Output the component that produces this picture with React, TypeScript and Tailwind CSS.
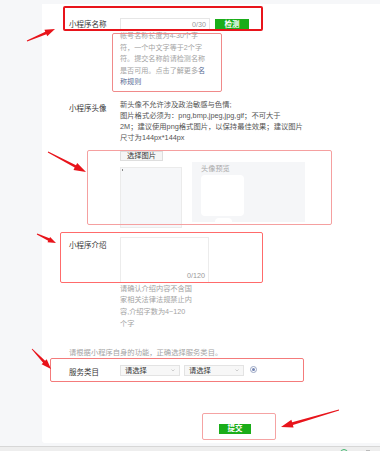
const font = { fontFamily: '"Liberation Sans", "Noto Sans CJK SC", sans-serif' }

type Pt = [number, number]

const arrowPoints = (tail: Pt, tip: Pt, headLen: number, headW: number) => {
    const dx = tip[0] - tail[0]
    const dy = tip[1] - tail[1]
    const len = Math.hypot(dx, dy)
    const ux = dx / len
    const uy = dy / len
    const nx = -uy
    const ny = ux
    const bx = tip[0] - ux * headLen
    const by = tip[1] - uy * headLen
    const p = (x: number, y: number, w: number, s: number) =>
        `${(x + nx * w * s).toFixed(1)},${(y + ny * w * s).toFixed(1)}`
    return [
        p(tail[0], tail[1], 0.4, 1),
        p(bx, by, 1.4, 1),
        p(bx, by, headW / 2, 1),
        `${tip[0]},${tip[1]}`,
        p(bx, by, headW / 2, -1),
        p(bx, by, 1.4, -1),
        p(tail[0], tail[1], 0.4, -1),
    ].join(" ")
}

const arrows: { tail: Pt; tip: Pt; head: number; w: number }[] = [
    { tail: [27, 41], tip: [55, 29], head: 10, w: 7 },
    { tail: [48, 152], tip: [86, 172], head: 12, w: 8 },
    { tail: [37, 234], tip: [56, 243], head: 8, w: 6 },
    { tail: [32, 349], tip: [51, 369], head: 10, w: 7 },
    { tail: [339, 410], tip: [281, 427], head: 12, w: 8 },
]

const Select = () => (
    <div className="flex items-center justify-between w-[60px] h-[11px] px-[4px] border border-[#e3e3e3] bg-[#f7f7f7] text-[7.3px] leading-[11px] text-[#353535]">
        <span>请选择</span>
        <svg width="4" height="3" viewBox="0 0 4 3">
            <polyline points="0.5,0.5 2,2 3.5,0.5" fill="none" stroke="#bbb" strokeWidth="0.7" />
        </svg>
    </div>
)

export default function App() {
    return (
        <div className="relative h-[451px] overflow-hidden bg-[#f6f7f9]" style={font}>
            <div className="pt-[4px] pl-[42px]">
                <div className="h-[439px] bg-white rounded-bl-[3px] pt-[14px] pl-[27px]">
                    {/* name */}
                    <div className="flex items-center h-[13px]">
                        <span className="w-[51px] shrink-0 text-[7.5px] text-[#353535]">小程序名称</span>
                        <div className="w-[90px] h-[13px] border border-[#e6e6e6] text-right pr-[3px] text-[7.2px] leading-[11px] text-[#9a9a9a]">
                            0/30
                        </div>
                        <button className="ml-[5px] w-[34px] h-[12px] bg-[#1aad19] text-white text-[7.5px] leading-[12px] font-bold">
                            检测
                        </button>
                    </div>
                    <p className="ml-[51px] w-[92px] text-[7.1px] leading-[11.5px] text-[#a3a3a3]">
                        帐号名称长度为4-30个字
                        <br />
                        符，一个中文字等于2个字
                        <br />
                        符。提交名称前请检测名称
                        <br />
                        是否可用。点击了解更多<span className="text-[#576b95]">名</span>
                        <br />
                        <span className="text-[#576b95]">称规则</span>
                    </p>

                    {/* avatar */}
                    <div className="flex items-start mt-[10px]">
                        <span className="w-[51px] shrink-0 mt-[4px] text-[7.5px] leading-[11px] text-[#353535]">小程序头像</span>
                        <div className="flex flex-col">
                            <p className="text-[7.3px] leading-[11px] text-[#555]">
                                新头像不允许涉及政治敏感与色情;
                                <br />
                                图片格式必须为：png,bmp,jpeg,jpg,gif；不可大于
                                <br />
                                2M；建议使用png格式图片，以保持最佳效果；建议图片
                                <br />
                                尺寸为144px*144px
                            </p>
                            <button className="mt-[8px] w-[43px] h-[10px] border border-[#dedede] bg-[#f5f5f5] text-[7.3px] leading-[8px] text-[#353535]">
                                选择图片
                            </button>
                            <div className="flex items-start gap-[10px] mt-[1px]">
                                <div className="relative mt-[5px] w-[62px] h-[61px] border border-[#ebebeb] bg-[#f6f7f9]">
                                    <span className="absolute left-[1px] top-[1px] w-[1px] h-[2px] bg-[#888]" />
                                </div>
                                <div className="flex flex-col items-start w-[113px] h-[60px] bg-[#f5f6f8] pl-[9px] pt-[2px]">
                                    <span className="text-[7.2px] leading-[9px] text-[#a8a8a8]">头像预览</span>
                                    <div className="w-[43px] h-[42px] mt-[2px] bg-white rounded-[4px]" />
                                    <div className="ml-[14px] mt-[2px] w-[17px] h-[4px] bg-white rounded-t-full" />
                                </div>
                            </div>
                        </div>
                    </div>

                    {/* intro */}
                    <div className="flex items-start mt-[9px]">
                        <span className="w-[51px] shrink-0 mt-[3.5px] text-[7.5px] leading-[11px] text-[#353535]">小程序介绍</span>
                        <div className="flex flex-col">
                            <div className="flex items-end justify-end w-[89px] h-[46px] border border-[#ececec] pr-[3px] pb-[1px] text-[7.2px] leading-[11px] text-[#9a9a9a]">
                                0/120
                            </div>
                            <p className="text-[7.2px] leading-[11.7px] text-[#a3a3a3]">
                                请确认介绍内容不含国
                                <br />
                                家相关法律法规禁止内
                                <br />
                                容,介绍字数为4~120
                                <br />
                                个字
                            </p>
                        </div>
                    </div>

                    {/* category */}
                    <p className="mt-[18px] text-[7.3px] leading-[11px] text-[#a3a3a3]">
                        请根据小程序自身的功能，正确选择服务类目。
                    </p>
                    <div className="flex items-center h-[11px] mt-[7px]">
                        <span className="w-[51px] shrink-0 pt-[3px] text-[7.5px] text-[#353535]">服务类目</span>
                        <Select />
                        <div className="ml-[4px]">
                            <Select />
                        </div>
                        <span className="ml-[6px] -mt-[3px] flex items-center justify-center w-[7px] h-[7px] rounded-full border border-[#9aa6c4]">
                            <span className="w-[3px] h-[3px] rounded-full bg-[#7485b3]" />
                        </span>
                    </div>

                    <button className="mt-[48px] ml-[150px] w-[32px] h-[10px] bg-[#1aad19] text-white text-[7.5px] leading-[10px] font-bold">
                        提交
                    </button>
                </div>
            </div>
            <div className="relative mt-[3px] h-[10px] border-t border-[#d7d7d7] bg-[#eeeeee]">
                <span className="absolute left-[340px] top-[2px] w-[8px] h-[8px] rounded-full border border-[#3fb56c]" />
                <span className="absolute left-[366px] top-[3px] w-[4px] h-[1px] bg-[#bbb]" />
            </div>

            {/* annotations */}
            <div className="absolute left-[63px] top-[6px] w-[200px] h-[25px] border-2 border-[#e8141b] rounded-[2px]" />
            <div className="absolute left-[112px] top-[33px] w-[110px] h-[59px] border-[1.5px] border-[#f08a8a] rounded-[2px]" />
            <div className="absolute left-[87px] top-[150px] w-[245px] h-[75px] border-[1.5px] border-[#f5a0a0] rounded-[2px]" />
            <div className="absolute left-[60px] top-[232px] w-[203px] h-[51px] border-[1.5px] border-[#ff6b6b] rounded-[2px]" />
            <div className="absolute left-[50px] top-[358px] w-[254px] h-[24px] border-[1.5px] border-[#f47b7b] rounded-[2px]" />
            <div className="absolute left-[202px] top-[413px] w-[74px] h-[27px] border-[1.5px] border-[#f5a3a3] rounded-[2px]" />
            <svg className="absolute left-0 top-0 pointer-events-none" width="380" height="451">
                {arrows.map((a, i) => (
                    <polygon key={i} points={arrowPoints(a.tail, a.tip, a.head, a.w)} fill="#e8141b" />
                ))}
            </svg>
        </div>
    )
}
